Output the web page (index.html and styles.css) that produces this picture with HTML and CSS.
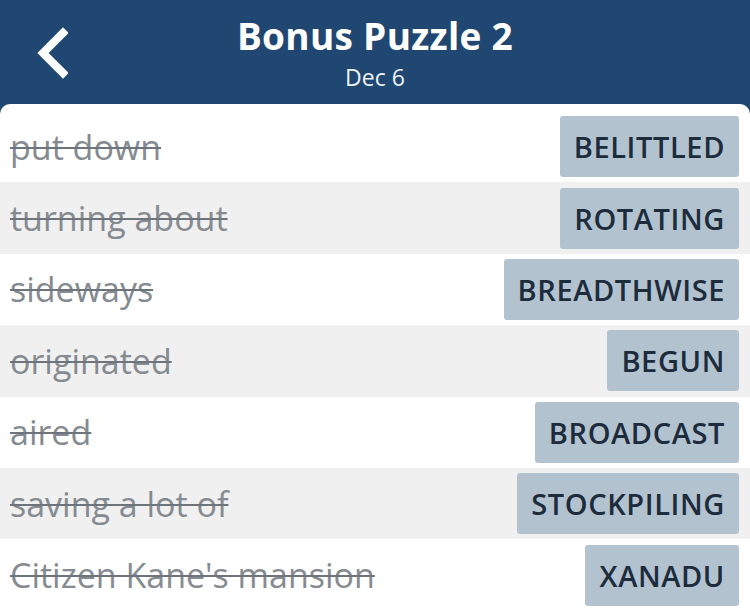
FILE: index.html
```html
<!DOCTYPE html>
<html lang="en">
<head>
    <meta charset="UTF-8">
    <meta name="viewport" content="width=device-width, initial-scale=1.0">
    <title>Bonus Puzzle 2</title>
    <link rel="stylesheet" href="styles.css">
</head>
<body>
    <header class="top-bar">
        <a class="back" href="#">
            <svg width="34" height="52" viewBox="0 0 34 52">
                <path d="M29 6 L9 26 L29 46" fill="none" stroke="#fff" stroke-width="8" stroke-linecap="square" stroke-linejoin="miter"/>
            </svg>
        </a>
        <div class="titles">
            <h1>Bonus Puzzle 2</h1>
            <p class="date">Dec 6</p>
        </div>
    </header>

    <main class="clue-list">
        <div class="clue">
            <span class="hint">put down</span>
            <span class="answer">BELITTLED</span>
        </div>
        <div class="clue">
            <span class="hint">turning about</span>
            <span class="answer">ROTATING</span>
        </div>
        <div class="clue">
            <span class="hint">sideways</span>
            <span class="answer">BREADTHWISE</span>
        </div>
        <div class="clue">
            <span class="hint">originated</span>
            <span class="answer">BEGUN</span>
        </div>
        <div class="clue">
            <span class="hint">aired</span>
            <span class="answer">BROADCAST</span>
        </div>
        <div class="clue">
            <span class="hint">saving a lot of</span>
            <span class="answer">STOCKPILING</span>
        </div>
        <div class="clue">
            <span class="hint">Citizen Kane's mansion</span>
            <span class="answer">XANADU</span>
        </div>
    </main>
</body>
</html>
```

FILE: styles.css
```css
body {
    margin: 0;
    background: #1f4772;
    font-family: "Open Sans", Lato, sans-serif;
    overflow: hidden;
}
.top-bar {
    height: 104px;
    display: flex;
    align-items: flex-start;
    justify-content: center;
    position: relative;
    color: white;
}
.back {
    position: absolute;
    left: 34px;
    top: 27px;
}
.titles { text-align: center; padding-top: 11px; }
.titles h1 {
    margin: 0;
    font-size: 37px;
    font-weight: 700;
    line-height: 50px;
    letter-spacing: 0.3px;
}
.date {
    margin: 0;
    font-size: 23px;
    line-height: 32px;
    color: #eef2f7;
}
.clue-list {
    background: white;
    border-radius: 10px 10px 0 0;
    padding-top: 7px;
}
.clue {
    height: 71.4px;
    display: flex;
    align-items: center;
    justify-content: space-between;
    padding: 0 11px 0 10px;
}
.clue:nth-child(even) { background: #f0f0f0; }
.hint {
    font-size: 34px;
    color: #858b91;
    text-decoration: line-through;
    text-decoration-color: #6d747b;
    text-decoration-thickness: 2px;
}
.answer {
    height: 61px;
    display: flex;
    align-items: center;
    padding: 0 14px;
    background: #b2c2cf;
    border-radius: 3px;
    color: #1d2c3d;
    font-size: 29px;
    font-weight: 600;
    letter-spacing: 0.6px;
}
```
